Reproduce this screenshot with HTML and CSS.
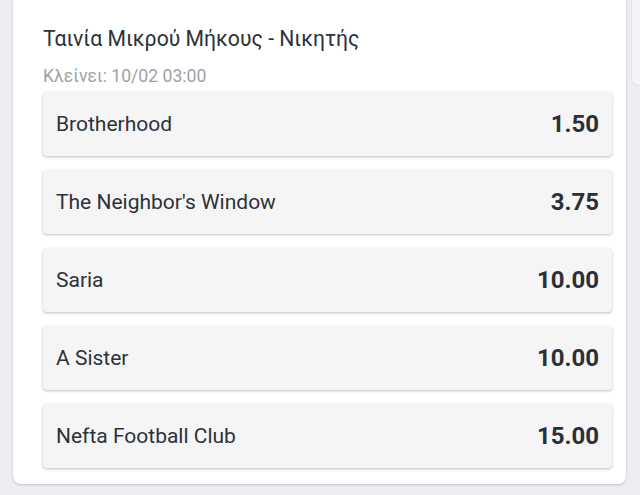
FILE: index.html
```html
<!DOCTYPE html>
<html lang="el">
<head>
<meta charset="utf-8">
<title>Ταινία Μικρού Μήκους - Νικητής</title>
<link rel="stylesheet" href="styles.css">
</head>
<body>
<div class="page">
  <section class="card">
    <h2 class="title">Ταινία Μικρού Μήκους - Νικητής</h2>
    <div class="closes">Κλείνει: 10/02 03:00</div>
    <ul class="options">
      <li class="option"><span class="name">Brotherhood</span><span class="odds">1.50</span></li>
      <li class="option"><span class="name">The Neighbor's Window</span><span class="odds">3.75</span></li>
      <li class="option"><span class="name">Saria</span><span class="odds">10.00</span></li>
      <li class="option"><span class="name">A Sister</span><span class="odds">10.00</span></li>
      <li class="option"><span class="name">Nefta Football Club</span><span class="odds">15.00</span></li>
    </ul>
  </section>
  <aside class="side"></aside>
</div>
</body>
</html>
```
FILE: styles.css
```css
html, body {
  margin: 0;
  padding: 0;
}
body {
  background: #eceef1;
  font-family: Roboto, "Liberation Sans", sans-serif;
  color: #2b3036;
  width: 640px;
  height: 495px;
  overflow: hidden;
}
.page {
  display: flex;
  align-items: flex-start;
}
.card {
  margin-left: 13px;
  width: 613px;
  box-sizing: border-box;
  background: #fff;
  border-radius: 0 0 8px 8px;
  box-shadow: 0 1px 3px rgba(0, 0, 0, 0.18);
  padding: 25px 14px 16px 30px;
  flex: none;
}
.title {
  margin: 0;
  font-size: 21.2px;
  line-height: 28px;
  font-weight: 400;
  color: #2c3239;
}
.closes {
  margin-top: 13px;
  font-size: 17.6px;
  line-height: 20px;
  color: #a0a2a6;
}
.options {
  list-style: none;
  margin: 6px 0 0 0;
  padding: 0;
  display: flex;
  flex-direction: column;
  gap: 14px;
}
.option {
  height: 64px;
  box-sizing: border-box;
  background: #f5f5f5;
  border-radius: 4px;
  box-shadow: 0 1px 3px rgba(0, 0, 0, 0.26);
  display: flex;
  align-items: center;
  justify-content: space-between;
  padding: 0 13px;
}
.name {
  font-size: 21px;
  color: #2c3239;
}
.odds {
  font-size: 24px;
  font-weight: 700;
  color: #2a3038;
}
.side {
  margin-left: 5px;
  width: 40px;
  height: 86px;
  flex: none;
  background: #f3f4f6;
  border: 1px solid #e2e4e7;
  border-top: none;
  border-right: none;
  border-radius: 0 0 0 8px;
  box-sizing: border-box;
}
```
